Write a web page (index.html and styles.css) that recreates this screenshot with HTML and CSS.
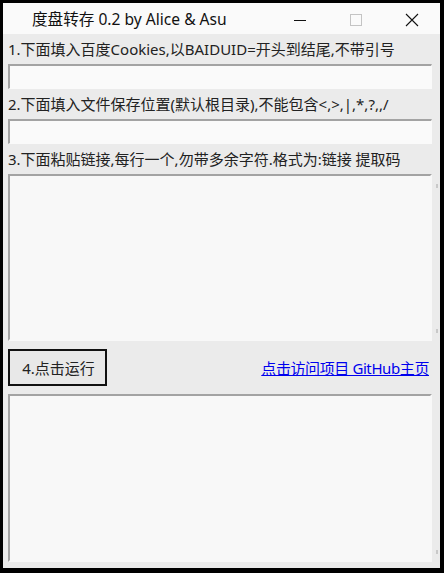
FILE: index.html
```html
<!DOCTYPE html>
<html>
  <head>
    <title>度盘转存</title>
    <meta name="viewport" content="width=device-width, initial-scale=1" />
    <link rel="stylesheet" href="styles.css">
  </head>
  <body>
    <div class="window">
      <div class="titlebar">
        <span class="title">度盘转存 0.2 by Alice &amp; Asu</span>
        <div class="controls">
          <span class="ctl">
            <svg width="14" height="14" viewBox="0 0 14 14"><line x1="1" y1="7.5" x2="13" y2="7.5" stroke="#111" stroke-width="1"/></svg>
          </span>
          <span class="ctl">
            <svg width="14" height="14" viewBox="0 0 14 14"><rect x="1.5" y="1.5" width="11" height="11" fill="none" stroke="#c4c4c4" stroke-width="1"/></svg>
          </span>
          <span class="ctl">
            <svg width="14" height="14" viewBox="0 0 14 14"><path d="M1 1 L13 13 M13 1 L1 13" stroke="#111" stroke-width="1.1"/></svg>
          </span>
        </div>
      </div>
      <div class="content">
        <label class="caption">1.下面填入百度Cookies,以BAIDUID=开头到结尾,不带引号</label>
        <div class="row"><input class="field" type="text" /><span class="grip"></span></div>
        <label class="caption">2.下面填入文件保存位置(默认根目录),不能包含&lt;,&gt;,|,*,?,,/</label>
        <div class="row"><input class="field" type="text" /><span class="grip"></span></div>
        <label class="caption">3.下面粘贴链接,每行一个,勿带多余字符.格式为:链接 提取码</label>
        <div class="row">
          <textarea class="box links"></textarea>
          <div class="scroll"><i></i><i></i></div>
        </div>
        <div class="actions">
          <button class="run">4.点击运行</button>
          <a class="home" href="#">点击访问项目 GitHub主页</a>
        </div>
        <div class="row">
          <textarea class="box log"></textarea>
          <div class="scroll"><i class="blank"></i><i></i></div>
        </div>
      </div>
    </div>
  </body>
</html>
```

FILE: styles.css
```css
* {
  padding: 0;
  margin: 0;
  box-sizing: border-box;
  font-family: "Noto Sans", "Noto Sans CJK SC", sans-serif;
}
body {
  background-color: #000;
  width: 444px;
  height: 573px;
  overflow: hidden;
}
.window {
  margin: 3px 4px 5px 3px;
  height: 565px;
  display: flex;
  flex-direction: column;
}
.titlebar {
  height: 31px;
  background-color: #fafafa;
  display: flex;
  align-items: center;
  justify-content: space-between;
}
.title {
  font-size: 15.6px;
  color: #111;
  padding-left: 29px;
}
.controls {
  display: flex;
  height: 100%;
}
.ctl {
  width: 56px;
  display: flex;
  align-items: center;
  justify-content: center;
  padding-top: 2px;
}
.content {
  flex: 1;
  background-color: #ebebeb;
  padding: 0 0 6px 5px;
  display: flex;
  flex-direction: column;
}
.caption {
  display: block;
  font-size: 15px;
  color: #222;
  height: 30px;
  line-height: 30px;
  white-space: nowrap;
}
.row {
  display: flex;
}
.grip {
  width: 8px;
}
.field {
  width: 424px;
  height: 25px;
  background-color: #fafafa;
  border: 1px solid #fafafa;
  border-top: 2px solid #a3a3a3;
  border-left: 2px solid #a3a3a3;
  outline: none;
}
.box {
  width: 424px;
  background-color: #f8f8f8;
  border: 2px solid #f8f8f8;
  border-top-color: #a3a3a3;
  border-left-color: #a3a3a3;
  outline: none;
  resize: none;
}
.links {
  height: 167px;
}
.log {
  height: 168px;
}
.scroll {
  width: 8px;
  display: flex;
  flex-direction: column;
  justify-content: space-between;
  align-items: center;
  padding: 10px 0 8px 2px;
}
.scroll i {
  display: block;
  width: 2px;
  height: 4px;
  background-color: #c9c9c9;
}
.scroll i.blank {
  background-color: transparent;
}
.actions {
  display: flex;
  align-items: center;
  justify-content: space-between;
  height: 53px;
  padding-right: 11px;
}
.run {
  width: 99px;
  height: 37px;
  background-color: #e8e8e8;
  border: 2px solid #111;
  font-size: 15px;
  color: #222;
  padding-left: 2px;
}
.home {
  font-size: 15px;
  letter-spacing: -0.4px;
  color: #0000ee;
}
```
